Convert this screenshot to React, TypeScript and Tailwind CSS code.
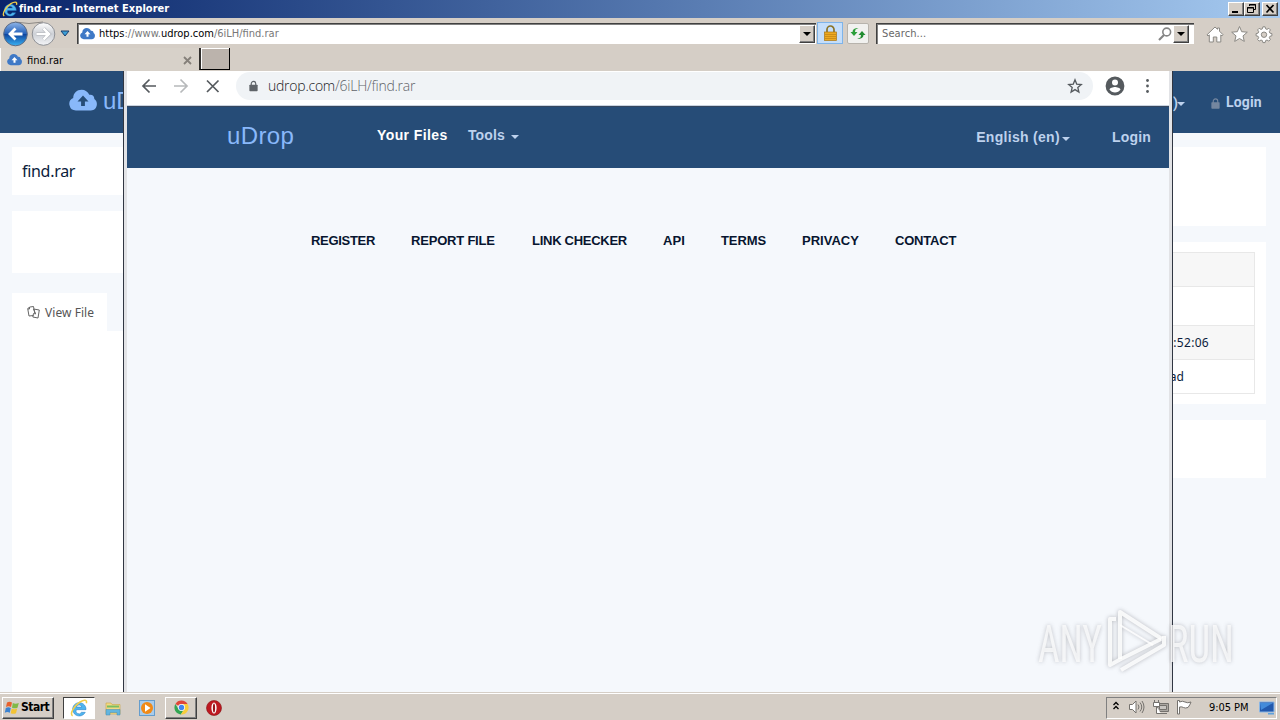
import type { ReactNode } from 'react';

const FOOTER_LINKS = [
  { label: 'REGISTER', box: 'w-[100px]', text: 'tracking-[-0.3px]' },
  { label: 'REPORT FILE', box: 'w-[121px]', text: 'tracking-[-0.2px]' },
  { label: 'LINK CHECKER', box: 'w-[131px]', text: 'tracking-[-0.27px]' },
  { label: 'API', box: 'w-[58px]', text: 'tracking-[0.1px]' },
  { label: 'TERMS', box: 'w-[81px]', text: 'tracking-[-0.1px]' },
  { label: 'PRIVACY', box: 'w-[93px]', text: 'tracking-[0px]' },
  { label: 'CONTACT', box: 'w-[70px]', text: 'tracking-[-0.2px]' },
];

const RAISED = 'bg-[#d5cec6] border border-t-white border-l-white border-r-[#404040] border-b-[#404040] shadow-[inset_-1px_-1px_0_#808080]';

function CloudIcon({ className, arrow }: { className: string; arrow: string }) {
  return (
    <svg className={className} viewBox="0 0 28 22">
      <path d="M7 21.5a6.6 6.6 0 0 1-2.8-12.6C4.300 4.200 8 .8 12.600.8c3.500 0 6.400 2 7.700 5 2.700-.7 5.200 1.200 5 4.200 1.600 1 2.600 2.800 2.600 5 0 3.700-2.600 6.500-6 6.500z" fill="currentColor" />
      <path d="M14 6.500 8.500 12.500h3.600V17h3.800v-4.500h3.600z" fill={arrow} />
    </svg>
  );
}

function IeIcon({ size }: { size: string }) {
  return (
    <svg className={size} viewBox="0 0 18 18">
      <path d="M16 10.700a6.700 6.700 0 1 0-.7 2.600h-3.900a2.800 2.800 0 0 1-5-2.600zM6.400 8a2.800 2.800 0 0 1 5.400 0z" fill="#4fb4ee" fillRule="evenodd" stroke="#2378c0" strokeWidth=".5" />
      <path d="M2.600 16.800C-.6 15 4 6.800 10 3c4-2.500 7.500-2.600 6.300 1.300" fill="none" stroke="#f1cd4a" strokeWidth="1.500" />
    </svg>
  );
}

function Lock({ className }: { className: string }) {
  return (
    <svg className={className} viewBox="0 0 10 12">
      <path d="M2.500 5.500V3.400a2.500 2.500 0 0 1 5 0v2.100" fill="none" stroke="currentColor" strokeWidth="1.300" />
      <rect x=".4" y="4.500" width="9.200" height="7.200" rx=".8" fill="currentColor" />
    </svg>
  );
}

function Caret({ className }: { className: string }) {
  return (
    <svg className={className} viewBox="0 0 8 4">
      <path d="M0 0h8L4 4z" fill="currentColor" />
    </svg>
  );
}

function WinButton({ children, className = '' }: { children: ReactNode; className?: string }) {
  return (
    <div className={`h-[14px] w-4 ${RAISED} ${className}`}>
      <svg className="h-3 w-[14px]" viewBox="0 0 14 12" fill="none" stroke="#000">
        {children}
      </svg>
    </div>
  );
}

function TitleBar() {
  return (
    <div className="flex h-[18px] items-center bg-linear-to-r from-[#0a246a] to-[#a6caf0] pl-0.5 pr-0.5">
      <IeIcon size="size-4" />
      <span className="ml-[1px] text-[11px] font-bold leading-[18px] tracking-[0.05px] text-white">find.rar - Internet Explorer</span>
      <WinButton className="ml-auto"><path d="M3 9h6" strokeWidth="2" /></WinButton>
      <WinButton><path d="M4.500 3V1.500h6v5H9M2.500 4.500h6v5h-6zM4 2h7M2 5h7" /></WinButton>
      <WinButton className="ml-0.5"><path d="m3.500 2 7 7.500m0-7.500-7 7.500" strokeWidth="1.700" /></WinButton>
    </div>
  );
}

function DropButton() {
  return (
    <div className={`flex h-[18px] w-4 items-center justify-center ${RAISED}`}>
      <Caret className="h-1 w-2 text-black" />
    </div>
  );
}

function AddressBar() {
  return (
    <div className="flex h-[30px] items-center bg-[#d5cec6] pl-[3px]">
      <svg className="h-[27px] w-[54px] shrink-0" viewBox="0 0 54 27">
        <defs>
          <linearGradient id="back" x2="0" y2="1">
            <stop stopColor="#8fb5e8" />
            <stop offset=".48" stopColor="#2763bb" />
            <stop offset=".52" stopColor="#0f469f" />
            <stop offset="1" stopColor="#39b2f4" />
          </linearGradient>
          <linearGradient id="fwd" x2="0" y2="1">
            <stop stopColor="#fff" />
            <stop offset=".5" stopColor="#cdd0d6" />
            <stop offset="1" stopColor="#f4f5f7" />
          </linearGradient>
        </defs>
        <path d="M12 2q14 3 28 0" fill="none" stroke="#8d8985" />
        <circle cx="12.500" cy="14" r="11.800" fill="url(#back)" stroke="#5d6b83" />
        <circle cx="40.500" cy="14" r="11.300" fill="url(#fwd)" stroke="#8f9196" />
        <path d="M19.500 14H7m5.500-5.500L7 14l5.500 5.500" fill="none" stroke="#fff" strokeWidth="2.800" />
        <path d="M33.500 14H46m-5.500-5.500L46 14l-5.500 5.500" fill="none" stroke="#aeb1b7" strokeWidth="3.800" />
        <path d="M33.500 14H46m-5.500-5.500L46 14l-5.500 5.500" fill="none" stroke="#fff" strokeWidth="2.500" />
      </svg>
      <svg className="ml-[3px] h-[7px] w-[10px]" viewBox="0 0 10 7">
        <path d="M1 1h8L5 6z" fill="#3ba0d8" stroke="#1b3e6d" />
      </svg>
      <div className="ml-[7px] flex h-[21px] w-[739px] items-center border-l border-t border-[#404040] bg-white pl-0.5 pr-px shadow-[inset_1px_1px_0_#808080]">
        <CloudIcon className="h-[13px] w-[15px] text-[#3f79c6]" arrow="#fff" />
        <span className="ml-1 mt-0.5 text-[11px] text-[#787878]">
          <span className="text-black">https</span>://www.<span className="text-black">udrop.com</span>/6iLH/find.rar
        </span>
        <div className="ml-auto"><DropButton /></div>
      </div>
      <div className="ml-px flex h-[22px] w-[26px] items-center justify-center border border-[#7eb4ea] bg-[#c5defa]">
        <svg className="h-4 w-[15px]" viewBox="0 0 15 16">
          <path d="M4 8V4.500a3.500 3.500 0 0 1 7 0V8" fill="none" stroke="#8a7327" strokeWidth="1.700" />
          <rect x="1.500" y="7" width="12" height="8.500" fill="#eeaa21" stroke="#a97613" strokeWidth=".7" />
          <path d="M2 9.500h11M2 11.500h11M2 13.500h11" stroke="#c48716" strokeWidth=".8" />
        </svg>
      </div>
      <div className="ml-1 flex h-[21px] w-[22px] items-center justify-center rounded-xs border border-[#b7b3ac] bg-[#f1f1ef]">
        <svg className="h-[15px] w-4" viewBox="0 0 16 15">
          <path d="M8.500 2 5.500 3.500 5 6h2.500L4 10 .5 6h2Q2.500 2 8.500 2z" fill="#2a9e38" />
          <path d="M7 13l3.500-1.500L11 9H8.500L12 5l3.500 4h-2Q13.500 13 7 13z" fill="#218c30" />
        </svg>
      </div>
      <div className="ml-[7px] flex h-[21px] w-[318px] items-center border-l border-t border-[#404040] bg-white pl-[5px] pr-[5px] shadow-[inset_1px_1px_0_#808080]">
        <span className="mt-0.5 text-[11px] tracking-[0.1px] text-[#686868]">Search...</span>
        <svg className="ml-auto mr-[1px] size-[14px]" viewBox="0 0 14 14" fill="none" stroke="#858585">
          <circle cx="8.700" cy="5" r="3.900" strokeWidth="1.600" />
          <path d="m6 8-5 5" strokeWidth="2.200" />
        </svg>
        <DropButton />
      </div>
      <svg className="ml-3 mt-[3px] h-5 w-[70px]" viewBox="0 0 70 20" fill="#fff" stroke="#8b8984">
        <path d="m9 2 2.500 2.300V3h2v3.200L17 9.700l-1 1.200-1.200-1V17h-4v-5H7.300v5h-4v-7.100L2 11l-1-1.200z" />
        <path d="m33.500 1.500 2.200 5.200 5.600.5-4.300 3.700 1.300 5.500-4.800-2.900-4.800 2.900 1.300-5.500-4.300-3.700 5.600-.5z" />
        <path d="m56.900 1.800h2.200l.5 2 1.400.6 1.800-1.100 1.600 1.600-1.100 1.800.6 1.400 2 .5v2.200l-2 .5-.6 1.400 1.100 1.800-1.600 1.600-1.800-1.100-1.400.6-.5 2h-2.200l-.5-2-1.400-.6-1.800 1.100-1.600-1.600 1.100-1.800-.6-1.400-2-.5V8.600l2-.5.6-1.400-1.100-1.800 1.600-1.600L55 4.400l1.400-.6z" />
        <circle cx="58" cy="9.700" r="2.700" fill="#d5cec6" />
      </svg>
    </div>
  );
}

function TabRow() {
  return (
    <div className="flex h-[23px] bg-[#d5cec6]">
      <div className="flex w-[199px] items-center border-l border-white bg-[#d7d1c9] pl-1.5 pr-[7px]">
        <CloudIcon className="h-[13px] w-[15px] text-[#3f79c6]" arrow="#fff" />
        <span className="ml-[5px] mt-[3px] text-[11px] text-black">find.rar</span>
        <svg className="ml-auto mt-0.5 size-[9px]" viewBox="0 0 9 9">
          <path d="m1 1 7 7m0-7L1 8" stroke="#85807a" strokeWidth="1.800" />
        </svg>
      </div>
      <div className="h-[22px] w-[31px] border border-t-0 border-black border-l-2 border-l-[#302e2c] bg-[#bbb3ac] shadow-[inset_1px_1px_0_#fff]" />
    </div>
  );
}

function FilePage() {
  return (
    <div className="flex h-full flex-col bg-[#f5f8fc] text-[#0b1c3c]">
      <div className="flex h-[62px] shrink-0 bg-[#264c77] pl-[69px] pt-[18px]">
        <CloudIcon className="h-[22px] w-[28px] text-[#89b8fa]" arrow="#264c77" />
        <span className="ml-1.5 font-['Liberation_Sans'] text-2xl leading-6 text-[#89b8fa]">uDrop</span>
        <div className="ml-auto flex h-7 items-center pr-[18px] font-['Roboto'] text-sm font-bold text-[#bdd1ed]">
          <span className="-mr-px">)</span>
          <Caret className="mt-0.5 h-1 w-2" />
          <Lock className="ml-[26px] h-[11px] w-[9px] text-[#74869f]" />
          <span className="-mt-0.5 ml-1.5 w-9 whitespace-nowrap tracking-[0.15px]">Login</span>
        </div>
      </div>
      <div className="flex flex-1 justify-between pl-3 pr-[14px] pt-[14px]">
        <div className="flex w-[600px] flex-col">
          <div className="flex h-12 items-center bg-white pl-2.5 font-['Noto_Sans'] text-base tracking-[-0.3px]">find.rar</div>
          <div className="mt-4 h-[62px] bg-white" />
          <div className="mt-5 flex h-[38px] w-[95px] items-center bg-white pl-[15px] pt-px font-['Noto_Sans'] text-xs text-[#555]">
            <svg className="mr-[5px] size-[13px] shrink-0" viewBox="0 0 13 13" fill="none" stroke="#666">
              <path d="M6.500 9.500 2 10 .7 2.500 3 1l3.500-.5L7.700 7M2.500 1v2H1m5.500 0 5.800 1-1.300 8-5.200-1 .7-3.500 2.200.4z" />
            </svg>
            <span className="whitespace-nowrap tracking-[0.05px]">View File</span>
          </div>
          <div className="flex-1 bg-white" />
        </div>
        <div className="flex w-[400px] flex-col font-['Noto_Sans'] text-xs">
          <div className="h-[79px] bg-white" />
          <div className="mt-4 h-[162px] bg-white px-[11px] pt-2.5">
            <div className="border border-[#e8e8e8]">
              <div className="h-[34px] border-b border-[#e8e8e8] bg-[#f7f7f7]" />
              <div className="h-[39px] border-b border-[#e8e8e8]" />
              <div className="flex h-[34px] items-center justify-end border-b border-[#e8e8e8] bg-[#f7f7f7] pr-[45px] tracking-[0.3px]">2022 20:52:06</div>
              <div className="flex h-[33px] items-center justify-end pr-[70px]">Download</div>
            </div>
          </div>
          <div className="mt-4 h-[58px] bg-white" />
        </div>
      </div>
    </div>
  );
}

function ChromeWindow() {
  return (
    <div className="absolute inset-y-0 left-[123px] right-[107px] flex flex-col border-x border-[#303642] bg-[#e2e3e6]">
      <div className="mx-[3px] flex flex-1 flex-col bg-[#f5f8fc]">
        <div className="flex h-[35px] shrink-0 items-start border-b border-[#c9d3e0] bg-white pl-[13px]">
          <svg className="mt-1.5 h-[18px] w-[82px]" viewBox="0 0 82 18" fill="none" strokeWidth="1.700">
            <path d="M16 9H3m6.500-6.500L3 9l6.500 6.500" stroke="#555a5e" />
            <path d="M34 9h13m-6.500-6.500L47 9l-6.500 6.500" stroke="#b7b9bb" />
            <path d="m67 3.500 11.500 11.500m0-11.500L67 15" stroke="#555a5e" />
          </svg>
          <div className="ml-[14px] mt-px flex h-7 w-[857px] items-center rounded-full bg-[#f0f3f6] pl-[13px] pr-2.5">
            <Lock className="h-3 w-[9px] text-[#5f6368]" />
            <span className="ml-[10px] font-['Open_Sans'] text-sm font-light tracking-[-0.24px] text-[#5f6368]">
              <span className="text-[#202124]">udrop.com</span>/6iLH/find.rar
            </span>
            <svg className="ml-auto size-4" viewBox="0 0 16 16">
              <path d="m8 1.800 1.700 4.300 4.600.4-3.500 3 1.100 4.500L8 11.600 4.100 14l1.100-4.500-3.500-3 4.600-.4z" fill="none" stroke="#555a5e" strokeWidth="1.300" />
            </svg>
          </div>
          <svg className="ml-3 mt-[5px] h-5 w-[52px]" viewBox="0 0 52 20" fill="#555a5e">
            <path d="M10 .6a9.400 9.400 0 1 0 0 18.800A9.400 9.400 0 0 0 10 .6m0 3a3 3 0 1 1 0 6 3 3 0 0 1 0-6m0 13c-2.300 0-4.300-1.200-5.500-3 .1-1.700 3.700-2.700 5.500-2.700s5.400 1 5.500 2.700c-1.200 1.800-3.200 3-5.500 3" />
            <circle cx="42.500" cy="4.500" r="1.400" />
            <circle cx="42.500" cy="10" r="1.400" />
            <circle cx="42.500" cy="15.500" r="1.400" />
          </svg>
        </div>
        <div className="flex h-[62px] shrink-0 border-t border-[#35475f] bg-[#264c77] pl-[100px] pr-[18px] font-['Liberation_Sans'] text-sm font-bold text-[#bdd1ed]">
          <span className="mt-[17px] w-[150px] text-2xl font-normal leading-6 tracking-[0.4px] text-[#89b8fa]">uDrop</span>
          <span className="mt-[18px] w-[91px] leading-5 tracking-[0.4px] text-white">Your Files</span>
          <span className="mt-[18px] w-[38px] leading-5 tracking-[0.1px]">Tools</span>
          <Caret className="ml-[5px] mt-[28px] h-1 w-2" />
          <span className="ml-auto mt-5 leading-5 tracking-[0.3px]">English (en)</span>
          <Caret className="ml-0.5 mt-[30px] h-1 w-2" />
          <span className="ml-[42px] mt-5 leading-5 tracking-[0.2px]">Login</span>
        </div>
        <div className="mt-[63px] flex pl-[184px] font-['Liberation_Sans'] text-[13px] font-bold leading-5 text-[#07152f]">
          {FOOTER_LINKS.map((link) => (
            <span key={link.label} className={`shrink-0 whitespace-nowrap ${link.box} ${link.text}`}>{link.label}</span>
          ))}
        </div>
      </div>
    </div>
  );
}

function Watermark() {
  return (
    <svg className="absolute bottom-4 right-[40px] h-[72px] w-[206px] overflow-visible font-stretch-condensed drop-shadow-[0_0_2px_rgba(60,60,70,0.4)]" viewBox="0 0 206 72" fill="#fff" fillOpacity=".72">
      <g fontFamily="Roboto" fontSize="52" fontWeight="400">
        <text x="4" y="58" textLength="64" lengthAdjust="spacingAndGlyphs">ANY</text>
        <text x="134" y="58" textLength="66" lengthAdjust="spacingAndGlyphs">RUN</text>
      </g>
      <g fill="none" stroke="#fff" strokeOpacity=".85" strokeWidth="4" strokeLinejoin="round">
        <path d="M86 55V8l42 27" />
        <path d="M82 15h-6v46l11-6 40-20" />
        <path d="m87 66 43-25v-9" />
        <path d="m86 21 33 20" strokeWidth="2" />
      </g>
    </svg>
  );
}

function Taskbar() {
  return (
    <div className="flex h-7 items-center border-t border-[#d5cec6] bg-[#d5cec6] pl-0.5 pr-[3px] shadow-[inset_0_1px_0_#fff]">
      <div className={`mt-0.5 flex h-[22px] w-[52px] items-center pl-px ${RAISED}`}>
        <svg className="size-4 shrink-0" viewBox="0 0 16 16">
          <path d="M3 2.500q2.500-1.500 5 0L7 7q-2.500-1.500-5 0z" fill="#e8612c" />
          <path d="M8.800 3q2.500 1.500 6 0l-1.300 4.700q-3 1.300-5.500 0z" fill="#80b946" />
          <path d="M1.800 8q2.500-1.500 5 0l-1 4.700q-2.500-1.500-5 0z" fill="#3c83d1" />
          <path d="M7.700 8.500q2.500 1.500 5.500 0L12 13.200q-2.700 1.300-5.300 0z" fill="#f3c334" />
        </svg>
        <span className="-mt-0.5 ml-px text-[12px] font-bold tracking-[-0.5px] text-black">Start</span>
      </div>
      <div className="ml-[9px] mt-0.5 flex h-[22px] w-8 items-center justify-center border border-[#404040] border-b-white border-r-white bg-white">
        <IeIcon size="size-[18px]" />
      </div>
      <svg className="ml-[9px] mt-0.5 h-4 w-[18px]" viewBox="0 0 18 16">
        <path d="M2 3h5l1 1.500h8V14H2z" fill="#f1d985" stroke="#c9a643" strokeWidth=".6" />
        <path d="M3 5.500h12v2H3z" fill="#79bd61" />
        <path d="M2 15V9.500h14V15h-3v-2.500H6V15z" fill="#62b5df" stroke="#4589af" strokeWidth=".5" />
      </svg>
      <svg className="ml-[17px] mt-0.5 size-4" viewBox="0 0 16 16">
        <rect x=".5" y=".5" width="15" height="15" fill="#a9cceb" stroke="#659dcd" />
        <circle cx="8" cy="8" r="6" fill="#f18a17" />
        <path d="m6 4.300 5.500 3.700L6 11.700z" fill="#fff" />
      </svg>
      <div className={`ml-2.5 mt-0.5 flex h-[22px] w-8 items-center justify-center ${RAISED}`}>
        <svg className="size-[15px]" viewBox="0 0 16 16">
          <path d="M8 8 1.500 4.200A7.500 7.500 0 0 1 14.500 4.300H8z" fill="#df4638" />
          <path d="M8 8 4.800 9.800 1.500 4.200A7.500 7.500 0 0 0 7.300 15.500L11 9.500z" fill="#32a552" />
          <path d="M8 4.300h6.500a7.500 7.500 0 0 1-7.200 11.200L11 9.500z" fill="#f8cd3a" />
          <circle cx="8" cy="8" r="3.700" fill="#fff" />
          <circle cx="8" cy="8" r="2.900" fill="#4286ee" />
        </svg>
      </div>
      <svg className="ml-[9px] mt-0.5 size-4" viewBox="0 0 16 16">
        <circle cx="8" cy="8" r="7.500" fill="#be1820" stroke="#851014" strokeWidth=".6" />
        <ellipse cx="8" cy="8" rx="2.600" ry="5.500" fill="#fff" />
        <ellipse cx="8" cy="8" rx="1.100" ry="4.500" fill="#981319" />
      </svg>
      <div className="ml-auto mt-0.5 flex h-[22px] w-[171px] items-center border border-[#808080] border-b-white border-r-white pl-1.5 pr-px">
        <svg className="-mt-1 h-[10px] w-[6px]" viewBox="0 0 6 10" fill="none" stroke="#000" strokeWidth="1.300">
          <path d="m.5 4 2.500-2.500L5.500 4m-5 4L3 5.500 5.500 8" />
        </svg>
        <svg className="-mt-0.5 ml-[9px] h-4 w-[66px]" viewBox="0 0 66 16" fill="#fff" stroke="#74716d">
          <path d="M1.500 5.500h3L8 2v12l-3.500-3.500h-3z" />
          <path d="M10 5.500q2 2.500 0 5m2-7q3.500 4.500 0 9m2-10.500q4 6 0 12" fill="none" />
          <path d="M29.500 4.500h11v8h-11z" fill="#aaa6a1" />
          <path d="M31.500 6.500h7v4h-7z" fill="#c8c5c1" />
          <path d="M32 14.500h7M26.500 1v2m4-2v2m-5 .5h6v4h-6zm3 4v7H33" />
          <path d="M49.500 15V1.500h2V3q3-1.500 5.500 0t6 0q-1 3-3 5.500-3 1-4.500 0T51.500 8v7z" />
        </svg>
        <span className="ml-[15px] mt-px whitespace-nowrap text-[11px] tracking-[-0.05px] text-black">9:05 PM</span>
        <svg className="ml-auto h-[14px] w-4" viewBox="0 0 16 14">
          <path d="M.5 1h14.500v10H.5z" fill="#2259ad" stroke="#8ab6e5" />
          <path d="M1 2h13L2 9z" fill="#438bda" />
          <path d="M9 12h6v1.500H9z" fill="#5da1dc" />
        </svg>
      </div>
    </div>
  );
}

export default function App() {
  return (
    <div className="relative flex h-[720px] w-[1280px] flex-col overflow-hidden font-['DejaVu_Sans_Condensed','DejaVu_Sans',sans-serif] font-stretch-condensed">
      <TitleBar />
      <AddressBar />
      <TabRow />
      <div className="relative min-h-0 flex-1 overflow-hidden font-stretch-normal">
        <FilePage />
        <ChromeWindow />
        <Watermark />
      </div>
      <Taskbar />
    </div>
  );
}
